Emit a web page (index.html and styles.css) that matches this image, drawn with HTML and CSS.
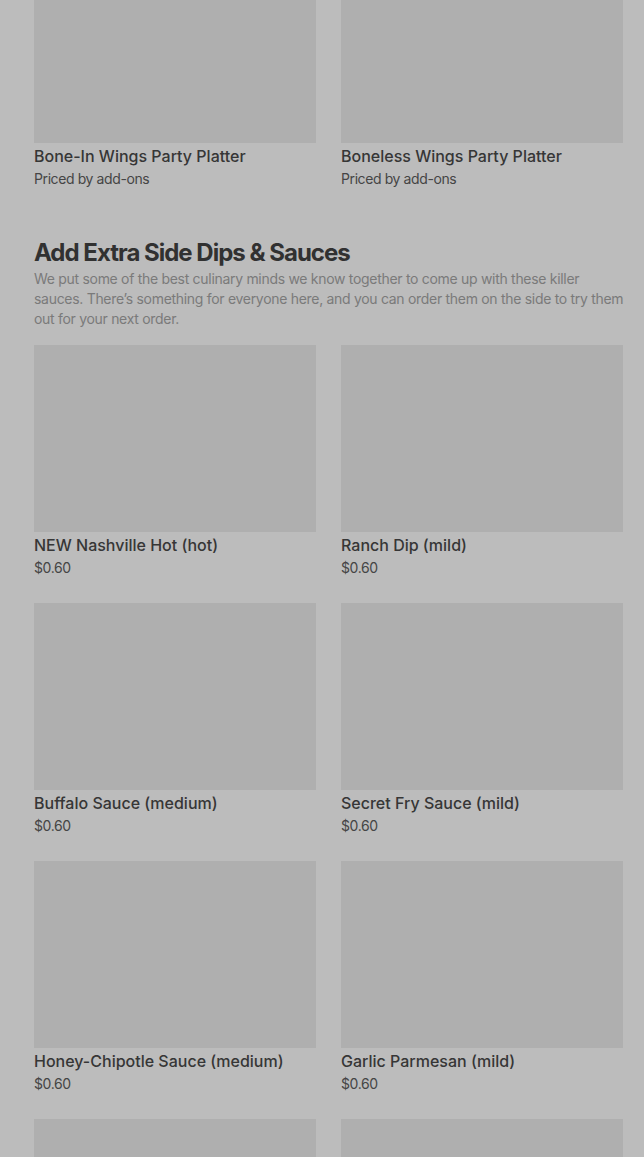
FILE: index.html
```html
<!DOCTYPE html>
<html lang="en">
  <head>
    <meta charset="UTF-8" />
    <meta name="viewport" content="width=device-width, initial-scale=1.0" />
    <title>Menu</title>
    <link rel="stylesheet" href="styles.css">
  </head>

  <body>
    <div class="menu">
      <section class="menu-section first">
        <div class="item-grid">
          <div class="item">
            <div class="item-image"></div>
            <div class="item-name">Bone-In Wings Party Platter</div>
            <div class="item-price">Priced by add-ons</div>
          </div>
          <div class="item">
            <div class="item-image"></div>
            <div class="item-name">Boneless Wings Party Platter</div>
            <div class="item-price">Priced by add-ons</div>
          </div>
        </div>
      </section>

      <section class="menu-section">
        <h2 class="section-title">Add Extra Side Dips &amp; Sauces</h2>
        <p class="section-desc">
          We put some of the best culinary minds we know together to come up with these killer
          sauces. There’s something for everyone here, and you can order them on the side to try them
          out for your next order.
        </p>
        <div class="item-grid">
          <div class="item">
            <div class="item-image"></div>
            <div class="item-name">NEW Nashville Hot (hot)</div>
            <div class="item-price">$0.60</div>
          </div>
          <div class="item">
            <div class="item-image"></div>
            <div class="item-name">Ranch Dip (mild)</div>
            <div class="item-price">$0.60</div>
          </div>
          <div class="item">
            <div class="item-image"></div>
            <div class="item-name">Buffalo Sauce (medium)</div>
            <div class="item-price">$0.60</div>
          </div>
          <div class="item">
            <div class="item-image"></div>
            <div class="item-name">Secret Fry Sauce (mild)</div>
            <div class="item-price">$0.60</div>
          </div>
          <div class="item">
            <div class="item-image"></div>
            <div class="item-name">Honey-Chipotle Sauce (medium)</div>
            <div class="item-price">$0.60</div>
          </div>
          <div class="item">
            <div class="item-image"></div>
            <div class="item-name">Garlic Parmesan (mild)</div>
            <div class="item-price">$0.60</div>
          </div>
          <div class="item">
            <div class="item-image"></div>
            <div class="item-name">&nbsp;</div>
            <div class="item-price">&nbsp;</div>
          </div>
          <div class="item">
            <div class="item-image"></div>
            <div class="item-name">&nbsp;</div>
            <div class="item-price">&nbsp;</div>
          </div>
        </div>
      </section>
    </div>
  </body>
</html>
```

FILE: styles.css
```css
html,
body {
  height: 100%;
  overflow: hidden;
}

body {
  font-family: Inter, "Liberation Sans", Arial, sans-serif;
  background-color: #bcbcbc;
  color: #333333;
  margin: 0;
  padding: 0;
}

/* page is scrolled a bit, first row of images is cut off at the top */
.menu {
  margin-top: -44px;
  padding: 0 21px 0 34px;
}

.menu-section.first {
  padding-bottom: 48px;
}

.section-title {
  font-size: 24px;
  font-weight: 700;
  letter-spacing: -1px;
  line-height: 32px;
  margin: 0;
  color: #313131;
}

.section-desc {
  font-size: 14px;
  line-height: 20px;
  color: #7a7a7a;
  margin: 0 -6px 16px 0;
  letter-spacing: -0.3px;
}

.item-grid {
  display: grid;
  grid-template-columns: 1fr 1fr;
  column-gap: 25px;
  row-gap: 25px;
}

.item-image {
  height: 187px;
  background-color: #afafaf;
}

.item-name {
  font-size: 16px;
  font-weight: 500;
  line-height: 20px;
  margin-top: 3px;
  color: #363636;
}

.item-price {
  font-size: 14px;
  line-height: 20px;
  margin-top: 3px;
  color: #454545;
  letter-spacing: -0.4px;
}
```
